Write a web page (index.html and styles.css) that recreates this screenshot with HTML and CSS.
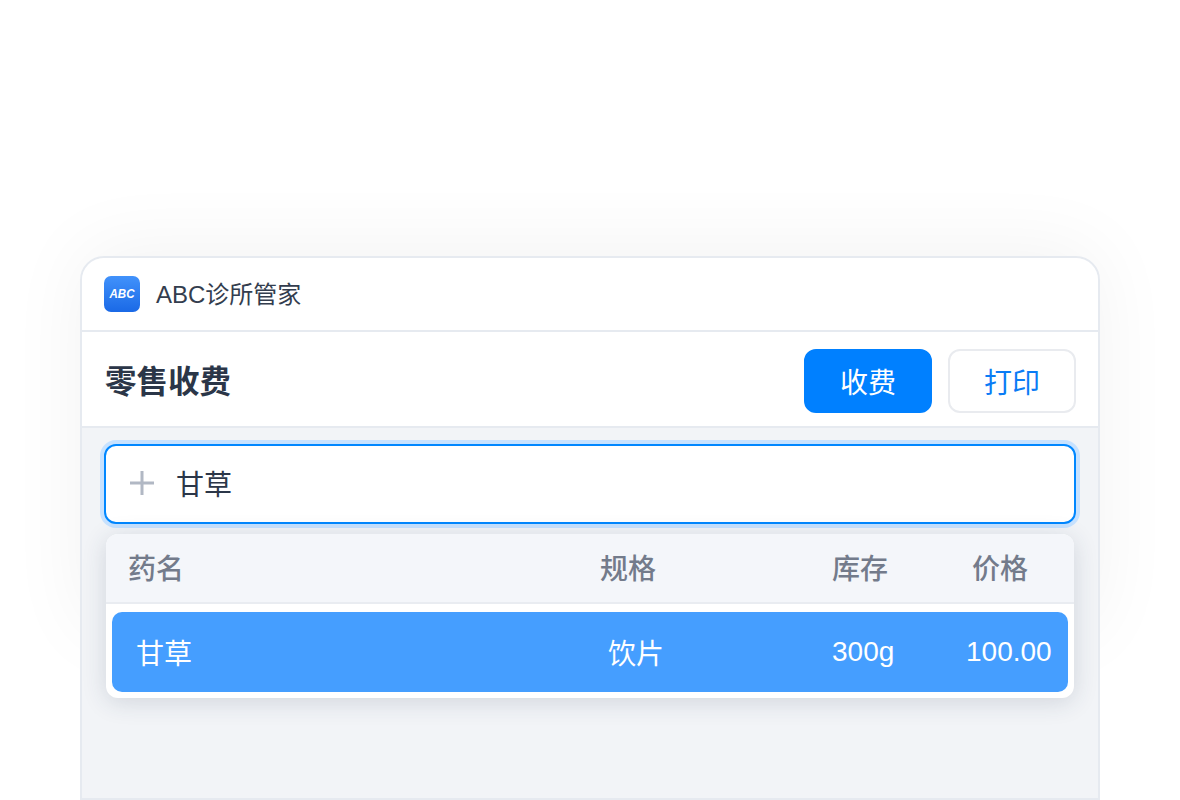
FILE: index.html
```html
<!DOCTYPE html>
<html lang="zh-CN">

<head>
    <meta charset="UTF-8">
    <title>ABC诊所管家</title>
    <link rel="stylesheet" href="styles.css">
</head>

<body>
    <div class="window">
        <header class="titlebar">
            <svg class="logo" width="36" height="36" viewBox="0 0 36 36">
                <defs>
                    <linearGradient id="logoBg" x1="0" y1="0" x2="0" y2="1">
                        <stop offset="0" stop-color="#4192fb" />
                        <stop offset="1" stop-color="#1a69e6" />
                    </linearGradient>
                </defs>
                <rect width="36" height="36" rx="7" fill="url(#logoBg)" />
                <text x="5.5" y="22" textLength="25" lengthAdjust="spacingAndGlyphs" class="logo-text">ABC</text>
            </svg>
            <span class="app-name">ABC诊所管家</span>
        </header>

        <div class="toolbar">
            <h1>零售收费</h1>
            <div class="actions">
                <button class="btn primary">收费</button>
                <button class="btn">打印</button>
            </div>
        </div>

        <main class="content">
            <div class="search">
                <svg width="24" height="24" viewBox="0 0 24 24">
                    <path d="M12 0V24M0 12H24" stroke="#b1b8c4" stroke-width="3" fill="none" />
                </svg>
                <span>甘草</span>
            </div>

            <div class="dropdown">
                <div class="cols head">
                    <span>药名</span>
                    <span>规格</span>
                    <span>库存</span>
                    <span>价格</span>
                </div>
                <div class="cols row">
                    <span>甘草</span>
                    <span>饮片</span>
                    <span>300g</span>
                    <span>100.00</span>
                </div>
            </div>
        </main>
    </div>
</body>

</html>
```

FILE: styles.css
```css
* {
    box-sizing: border-box;
    font-family: "Liberation Sans", "Noto Sans CJK SC", sans-serif;
}

html,
body {
    height: 100%;
    overflow: hidden;
}

body {
    margin: 0;
    padding: 256px 80px 0;
    background: #fff;
}

.window {
    position: relative;
    display: flex;
    flex-direction: column;
    height: 544px;
    background: #f2f4f7;
    border: 2px solid #e6eaf0;
    border-radius: 24px 24px 0 0;
}

/* soft glow behind the window, dies out before the bottom edge */
.window::before {
    content: "";
    position: absolute;
    z-index: -1;
    top: 0;
    left: 0;
    right: 0;
    height: 380px;
    border-radius: 24px;
    box-shadow: 0 -8px 80px rgba(0, 0, 0, 0.055);
}

.titlebar {
    display: flex;
    align-items: center;
    gap: 16px;
    height: 74px;
    padding: 0 22px;
    background: #fff;
    border-bottom: 2px solid #e6eaf0;
    border-radius: 22px 22px 0 0;
}

.logo-text {
    font-size: 12px;
    font-weight: 700;
    font-style: italic;
    fill: #fff;
}

.app-name {
    margin-bottom: 3px;
    font-size: 24px;
    color: #333d4e;
}

.toolbar {
    display: flex;
    align-items: center;
    justify-content: space-between;
    height: 96px;
    padding: 4px 22px 0 23px;
    background: #fff;
    border-bottom: 2px solid #e6eaf0;
}

.toolbar h1 {
    margin: -4px 0 0;
    font-size: 31.5px;
    font-weight: 700;
    color: #2b3648;
}

.actions {
    display: flex;
    gap: 16px;
}

.btn {
    width: 128px;
    height: 64px;
    padding: 0;
    font-size: 28px;
    color: #0a7cf5;
    background: #fff;
    border: 2px solid #e9ebef;
    border-radius: 12px;
}

.btn.primary {
    color: #fff;
    background: #0080ff;
    border-color: #0080ff;
}

.content {
    flex: 1;
    padding: 16px 22px 0;
}

.search {
    display: flex;
    align-items: center;
    gap: 22px;
    height: 80px;
    padding: 0 24px 2px;
    font-size: 28px;
    color: #2b3648;
    background: #fff;
    border: 2px solid #0087ff;
    border-radius: 12px;
    box-shadow: 0 0 0 4px #c7e2ff;
}

.dropdown {
    margin: 10px 2px 0;
    height: 164px;
    background: #fff;
    border-radius: 12px;
    box-shadow: 0 4px 24px rgba(40, 55, 85, 0.16);
}

.cols {
    display: grid;
    align-items: center;
    font-size: 28px;
}

.head {
    grid-template-columns: 472px 232px 140px 1fr;
    height: 70px;
    padding: 0 0 3px 22px;
    font-weight: 500;
    color: #737b8b;
    background: #f4f6fa;
    border-bottom: 2px solid #e9ecf1;
    border-radius: 12px 12px 0 0;
}

.row {
    grid-template-columns: 472px 224px 134px 1fr;
    height: 80px;
    margin: 8px 6px 0;
    padding: 0 0 1px 24px;
    color: #fff;
    background: #459eff;
    border-radius: 10px;
}
```
